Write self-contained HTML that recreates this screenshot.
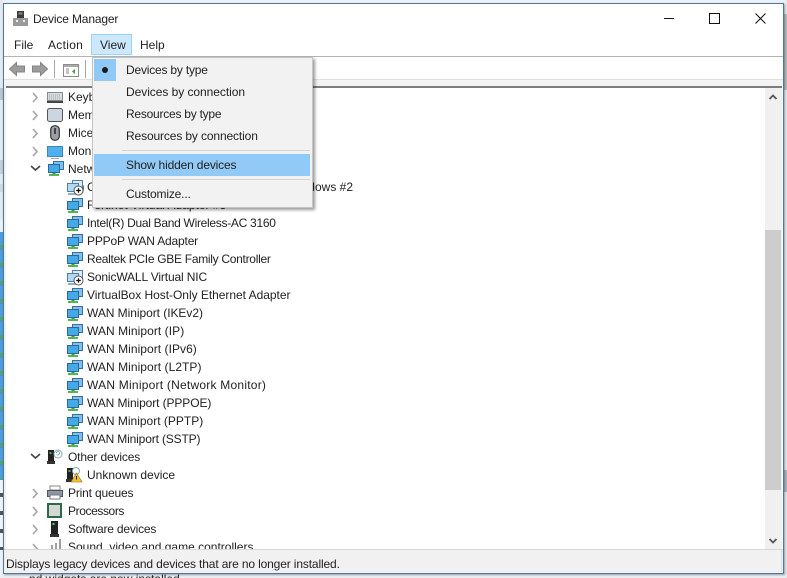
<!DOCTYPE html>
<html><head><meta charset="utf-8">
<style>
html,body{margin:0;padding:0}
body{width:787px;height:578px;overflow:hidden;position:relative;background:#eef1f4;font-family:"Liberation Sans",sans-serif;font-size:12px;color:#222}
.a{position:absolute}
.t{position:absolute;white-space:nowrap;line-height:18px;height:18px}
svg{position:absolute;overflow:visible}
</style></head><body>
<svg width="0" height="0" style="position:absolute">
<defs>
<g id="net">
<rect x="5.500" y="0.500" width="10" height="8" fill="#7cc2ee" stroke="#3b6f98"/>
<rect x="0.500" y="3.500" width="11" height="8" fill="#45a9e8" stroke="#2f6a96"/>
<rect x="4.500" y="12" width="3" height="1" fill="#3a9a3e"/>
<rect x="1" y="13" width="10" height="2" fill="#52b752"/>
</g>
<g id="vnet">
<rect x="5.500" y="0.500" width="10" height="8" fill="#dceaf5" stroke="#4f7ea6"/>
<rect x="0.500" y="3.500" width="11" height="8" fill="#b5d7f0" stroke="#4f7ea6"/>
<rect x="1" y="13" width="8" height="2" fill="#8fb2c8"/>
<circle cx="11.500" cy="10.500" r="4.500" fill="#fff" stroke="#555"/>
<path d="M9.200 10.500h4.600M11.500 8.200v4.600" stroke="#111" stroke-width="1.300"/>
</g>
<path id="cr" d="M0 0l4 4.500-4 4.500" fill="none" stroke="#a6a6a6" stroke-width="1.600"/>
<path id="cd" d="M0 0l4.500 4 4.500-4" fill="none" stroke="#444" stroke-width="1.600"/>
</defs>
</svg>

<!-- background strips -->
<div class="a" style="left:0;top:0;width:3px;height:220px;background:#e6e8ea"></div>
<div class="a" style="left:0;top:88px;width:3px;height:12px;background:#bcc3ca"></div>
<div class="a" style="left:0;top:160px;width:3px;height:14px;background:#c8cdd0"></div>
<div class="a" style="left:0;top:184px;width:3px;height:8px;background:#d4d8da"></div>
<div class="a" style="left:0;top:232px;width:3px;height:248px;background:repeating-linear-gradient(180deg,#4a9fdc 0 13px,#55a85a 13px 16px,#5b8fc0 16px 18px)"></div>
<div class="a" style="left:0;top:480px;width:3px;height:70px;background:repeating-linear-gradient(180deg,#f2f2f2 0 13px,#555 13px 17px,#f2f2f2 17px 18px)"></div>
<div class="a" style="left:785px;top:0;width:2px;height:578px;background:#e8ebee"></div>
<div class="a" style="left:784px;top:14px;width:3px;height:76px;background:#b8bcbc"></div>
<div class="a" style="left:784px;top:470px;width:3px;height:22px;background:#aeb6be"></div>
<div class="t" style="left:29px;top:572px;color:#222;height:6px;overflow:hidden;line-height:14px">nd widgets are now installed</div>

<!-- window -->
<div class="a" style="left:3px;top:3px;width:779px;height:569px;background:#fff;border:1px solid #4a7aa0;box-shadow:1px 1px 2px rgba(40,50,70,.45)"></div>

<!-- title -->
<svg style="left:13px;top:11px" width="15" height="16">
<rect x="4" y="0" width="7" height="7" fill="#3c3c3c"/>
<rect x="5.500" y="1.500" width="4" height="2" fill="#8a8a8a"/>
<rect x="0" y="7" width="15" height="8" fill="#9a9a9a"/>
<rect x="3" y="9" width="2" height="2" fill="#eee"/><rect x="10" y="9" width="2" height="2" fill="#eee"/>
</svg>
<div class="t" style="left:33px;top:10px;letter-spacing:-.15px">Device Manager</div>
<div class="a" style="left:664px;top:18px;width:10px;height:1px;background:#111"></div>
<div class="a" style="left:709px;top:13px;width:9px;height:9px;border:1px solid #111"></div>
<svg style="left:755px;top:13px" width="11" height="11"><path d="M.5.5l10 10M10.500.5l-10 10" stroke="#111" stroke-width="1"/></svg>

<!-- menubar -->
<div class="a" style="left:91px;top:34px;width:39px;height:19px;background:#cce8ff;border:1px solid #99d1ff"></div>
<div class="t" style="left:14px;top:36px">File</div>
<div class="t" style="left:48px;top:36px;letter-spacing:.3px">Action</div>
<div class="t" style="left:100px;top:36px">View</div>
<div class="t" style="left:140px;top:36px">Help</div>
<div class="a" style="left:4px;top:56px;width:779px;height:1px;background:#b4b4b4"></div>

<!-- toolbar -->
<svg style="left:9px;top:62px" width="16" height="14"><path d="M7.500 .5L.5 7l7 6.500V10h8V4h-8z" fill="#9c9c9c" stroke="#858585"/></svg>
<svg style="left:32px;top:62px" width="16" height="14"><path d="M8.500 .5l7 6.500-7 6.500V10h-8V4h8z" fill="#9c9c9c" stroke="#858585"/></svg>
<div class="a" style="left:54px;top:60px;width:1px;height:18px;background:#a8a8a8"></div>
<svg style="left:63px;top:64px" width="16" height="13"><rect x=".5" y=".5" width="15" height="12" fill="#fff" stroke="#8c8c8c"/><rect x="1" y="1" width="14" height="2" fill="#aaa"/><path d="M3 5h3M3 7h3M3 9h3" stroke="#888"/><path d="M12 5v5l-3-2.500z" fill="#4a9a4a"/></svg>
<div class="a" style="left:85px;top:60px;width:1px;height:18px;background:#a8a8a8"></div>
<div class="a" style="left:4px;top:79px;width:779px;height:7px;background:#f3f3f3;border-top:1px solid #e0e0e0;box-sizing:border-box"></div>
<div class="a" style="left:6px;top:86px;width:776px;height:2px;background:#7d7d7d"></div>
<div class="a" style="left:4px;top:86px;width:2px;height:464px;background:#f0f0f0"></div>

<!-- scrollbar -->
<div class="a" style="left:765px;top:88px;width:17px;height:462px;background:#f0f0f0"></div>
<div class="a" style="left:765px;top:230px;width:16px;height:260px;background:#cdcdcd"></div>
<svg style="left:769px;top:94px" width="8" height="6"><path d="M.5 5L4 1.500 7.500 5" fill="none" stroke="#555" stroke-width="1.800"/></svg>
<svg style="left:769px;top:538px" width="8" height="6"><path d="M.5 1L4 4.500 7.500 1" fill="none" stroke="#555" stroke-width="1.800"/></svg>

<!-- tree expanders -->
<svg style="left:33px;top:93px" width="6" height="10"><use href="#cr"/></svg>
<svg style="left:33px;top:111px" width="6" height="10"><use href="#cr"/></svg>
<svg style="left:33px;top:129px" width="6" height="10"><use href="#cr"/></svg>
<svg style="left:33px;top:147px" width="6" height="10"><use href="#cr"/></svg>
<svg style="left:31px;top:166px" width="10" height="6"><use href="#cd"/></svg>
<svg style="left:31px;top:454px" width="10" height="6"><use href="#cd"/></svg>
<svg style="left:33px;top:489px" width="6" height="10"><use href="#cr"/></svg>
<svg style="left:33px;top:507px" width="6" height="10"><use href="#cr"/></svg>
<svg style="left:33px;top:525px" width="6" height="10"><use href="#cr"/></svg>
<svg style="left:33px;top:544px" width="6" height="5" style="overflow:hidden"><use href="#cr"/></svg>

<!-- top-level icons -->
<svg style="left:47px;top:92px" width="16" height="11"><rect x=".5" y=".5" width="15" height="8" fill="#d8dce0" stroke="#8a8a8a"/><path d="M2 3h12M2 5h12M2 7h12" stroke="#9aa" stroke-dasharray="1 1"/><rect x="0" y="9" width="16" height="2" fill="#444"/></svg>
<svg style="left:47px;top:108px" width="16" height="14"><rect x=".5" y=".5" width="15" height="13" rx="2" fill="#ccd6e0" stroke="#555"/></svg>
<svg style="left:50px;top:125px" width="10" height="16"><rect x=".7" y=".7" width="8.600" height="14.600" rx="4" fill="#9aa0a6" stroke="#333" stroke-width="1.200"/><rect x="4" y="3" width="2" height="6" fill="#444"/></svg>
<svg style="left:47px;top:146px" width="16" height="14"><rect x=".5" y=".5" width="15" height="10" fill="#50b0ee" stroke="#3d86c0"/><rect x="4" y="12" width="8" height="1" fill="#a0a8b0"/></svg>
<svg style="left:48px;top:161px" width="16" height="15"><use href="#net"/></svg>
<svg style="left:47px;top:449px" width="16" height="16"><rect x="1" y="1" width="6" height="11" fill="#222"/><rect x="2.500" y="3" width="2" height="2" fill="#5a5"/><rect x="0" y="12" width="8" height="3" fill="#333"/><circle cx="11" cy="5" r="4" fill="#fff" stroke="#8ab"/><path d="M9.500 4a1.500 1.500 0 1 1 1.500 1.500v1" fill="none" stroke="#69a" stroke-width=".8"/></svg>
<svg style="left:66px;top:467px" width="16" height="16"><rect x="1" y="1" width="6" height="11" fill="#222"/><rect x="2.500" y="3" width="2" height="2" fill="#5a5"/><rect x="0" y="12" width="8" height="3" fill="#333"/><circle cx="10" cy="4" r="3.500" fill="#fff" stroke="#8ab"/><path d="M10.500 6L16 15H5z" fill="#f2c230" stroke="#8a6a10" stroke-width=".6"/><path d="M10.500 9v3.500" stroke="#222"/></svg>
<svg style="left:47px;top:486px" width="16" height="14"><rect x="3" y="0" width="10" height="4" fill="#fff" stroke="#888"/><rect x=".5" y="4.500" width="15" height="6" fill="#8a97a4" stroke="#555"/><rect x="3" y="9" width="10" height="4" fill="#fff" stroke="#777"/></svg>
<svg style="left:47px;top:503px" width="15" height="15"><rect x="1" y="1" width="13" height="13" fill="#d4d8d4" stroke="#2c6a44" stroke-width="2"/></svg>
<svg style="left:50px;top:521px" width="9" height="16"><rect x="1" y="0" width="7" height="13" fill="#222"/><rect x="2.500" y="2" width="2" height="2" fill="#6c6"/><rect x="0" y="13" width="9" height="3" fill="#333"/></svg>
<svg style="left:50px;top:539px" width="12" height="11"><path d="M1 6h2v5H1zM5 4h2v7H5zM9 0h2v11H9z" fill="#a0a0a0"/></svg>

<!-- tree text -->
<div class="t" style="left:68px;top:88px">Keyboards</div>
<div class="t" style="left:68px;top:106px">Memory devices</div>
<div class="t" style="left:68px;top:124px">Mice and other pointing devices</div>
<div class="t" style="left:68px;top:142px">Monitors</div>
<div class="t" style="left:68px;top:160px">Network adapters</div>

<svg style="left:67px;top:180px" width="16" height="15"><use href="#vnet"/></svg>
<svg style="left:67px;top:198px" width="16" height="15"><use href="#net"/></svg>
<svg style="left:67px;top:216px" width="16" height="15"><use href="#net"/></svg>
<svg style="left:67px;top:234px" width="16" height="15"><use href="#net"/></svg>
<svg style="left:67px;top:252px" width="16" height="15"><use href="#net"/></svg>
<svg style="left:67px;top:270px" width="16" height="15"><use href="#vnet"/></svg>
<svg style="left:67px;top:288px" width="16" height="15"><use href="#net"/></svg>
<svg style="left:67px;top:306px" width="16" height="15"><use href="#net"/></svg>
<svg style="left:67px;top:324px" width="16" height="15"><use href="#net"/></svg>
<svg style="left:67px;top:342px" width="16" height="15"><use href="#net"/></svg>
<svg style="left:67px;top:360px" width="16" height="15"><use href="#net"/></svg>
<svg style="left:67px;top:378px" width="16" height="15"><use href="#net"/></svg>
<svg style="left:67px;top:396px" width="16" height="15"><use href="#net"/></svg>
<svg style="left:67px;top:414px" width="16" height="15"><use href="#net"/></svg>
<svg style="left:67px;top:432px" width="16" height="15"><use href="#net"/></svg>

<div class="t" style="right:434px;top:178px">Check Point Virtual Network Adapter For Windows #2</div>
<div class="a" style="left:60px;top:178px;width:27px;height:18px;overflow:hidden"></div>
<svg style="left:67px;top:180px" width="16" height="15"><use href="#vnet"/></svg>
<div class="a" style="left:84px;top:178px;width:3px;height:18px;background:#fff"></div>
<div class="t" style="left:87px;top:178px;width:5px;overflow:hidden;background:#fff">C</div>
<div class="t" style="left:87px;top:196px">Fortinet Virtual Adapter #3</div>
<div class="t" style="left:87px;top:214px;letter-spacing:-.29px">Intel(R) Dual Band Wireless-AC 3160</div>
<div class="t" style="left:87px;top:232px;letter-spacing:-.18px">PPPoP WAN Adapter</div>
<div class="t" style="left:87px;top:250px;letter-spacing:-.29px">Realtek PCIe GBE Family Controller</div>
<div class="t" style="left:87px;top:268px;letter-spacing:-.14px">SonicWALL Virtual NIC</div>
<div class="t" style="left:87px;top:286px;letter-spacing:-.03px">VirtualBox Host-Only Ethernet Adapter</div>
<div class="t" style="left:87px;top:304px;letter-spacing:-.05px">WAN Miniport (IKEv2)</div>
<div class="t" style="left:87px;top:322px;letter-spacing:.06px">WAN Miniport (IP)</div>
<div class="t" style="left:87px;top:340px;letter-spacing:.05px">WAN Miniport (IPv6)</div>
<div class="t" style="left:87px;top:358px;letter-spacing:.05px">WAN Miniport (L2TP)</div>
<div class="t" style="left:87px;top:376px;letter-spacing:.23px">WAN Miniport (Network Monitor)</div>
<div class="t" style="left:87px;top:394px;letter-spacing:-.1px">WAN Miniport (PPPOE)</div>
<div class="t" style="left:87px;top:412px">WAN Miniport (PPTP)</div>
<div class="t" style="left:87px;top:430px;letter-spacing:-.15px">WAN Miniport (SSTP)</div>
<div class="t" style="left:68px;top:448px;letter-spacing:-.15px">Other devices</div>
<div class="t" style="left:87px;top:466px">Unknown device</div>
<div class="t" style="left:68px;top:484px;letter-spacing:-.17px">Print queues</div>
<div class="t" style="left:68px;top:502px;letter-spacing:-.4px">Processors</div>
<div class="t" style="left:68px;top:520px;letter-spacing:-.2px">Software devices</div>
<div class="t" style="left:68px;top:538px;height:12px;overflow:hidden">Sound, video and game controllers</div>

<!-- status bar -->
<div class="a" style="left:4px;top:549px;width:779px;height:24px;box-sizing:border-box;background:#f1f1f1;border-top:1px solid #d7d7d7"></div>
<div class="a" style="left:781px;top:550px;width:1px;height:22px;background:#e0e0e0"></div>
<div class="t" style="left:6px;top:555px;letter-spacing:-.14px">Displays legacy devices and devices that are no longer installed.</div>

<!-- view menu -->
<div class="a" style="left:92px;top:57px;width:221px;height:151px;background:#f2f2f2;border:1px solid #c4c4c4;box-sizing:border-box;box-shadow:2px 2px 3px rgba(0,0,0,.4)"></div>
<div class="a" style="left:94px;top:59px;width:22px;height:22px;background:#90c8f6"></div>
<div class="a" style="left:102px;top:67px;width:6px;height:6px;border-radius:50%;background:#1a1a1a"></div>
<div class="a" style="left:94px;top:154px;width:216px;height:22px;background:#91c9f7"></div>
<div class="a" style="left:122px;top:150px;width:188px;height:1px;background:#d4d4d4"></div>
<div class="a" style="left:122px;top:179px;width:188px;height:1px;background:#d4d4d4"></div>
<div class="t" style="left:126px;top:61px;letter-spacing:-.2px">Devices by type</div>
<div class="t" style="left:126px;top:83px;letter-spacing:-.05px">Devices by connection</div>
<div class="t" style="left:126px;top:105px;letter-spacing:-.24px">Resources by type</div>
<div class="t" style="left:126px;top:127px;letter-spacing:-.13px">Resources by connection</div>
<div class="t" style="left:126px;top:156px;letter-spacing:-.16px">Show hidden devices</div>
<div class="t" style="left:126px;top:185px;letter-spacing:-.17px">Customize...</div>
</body></html>
